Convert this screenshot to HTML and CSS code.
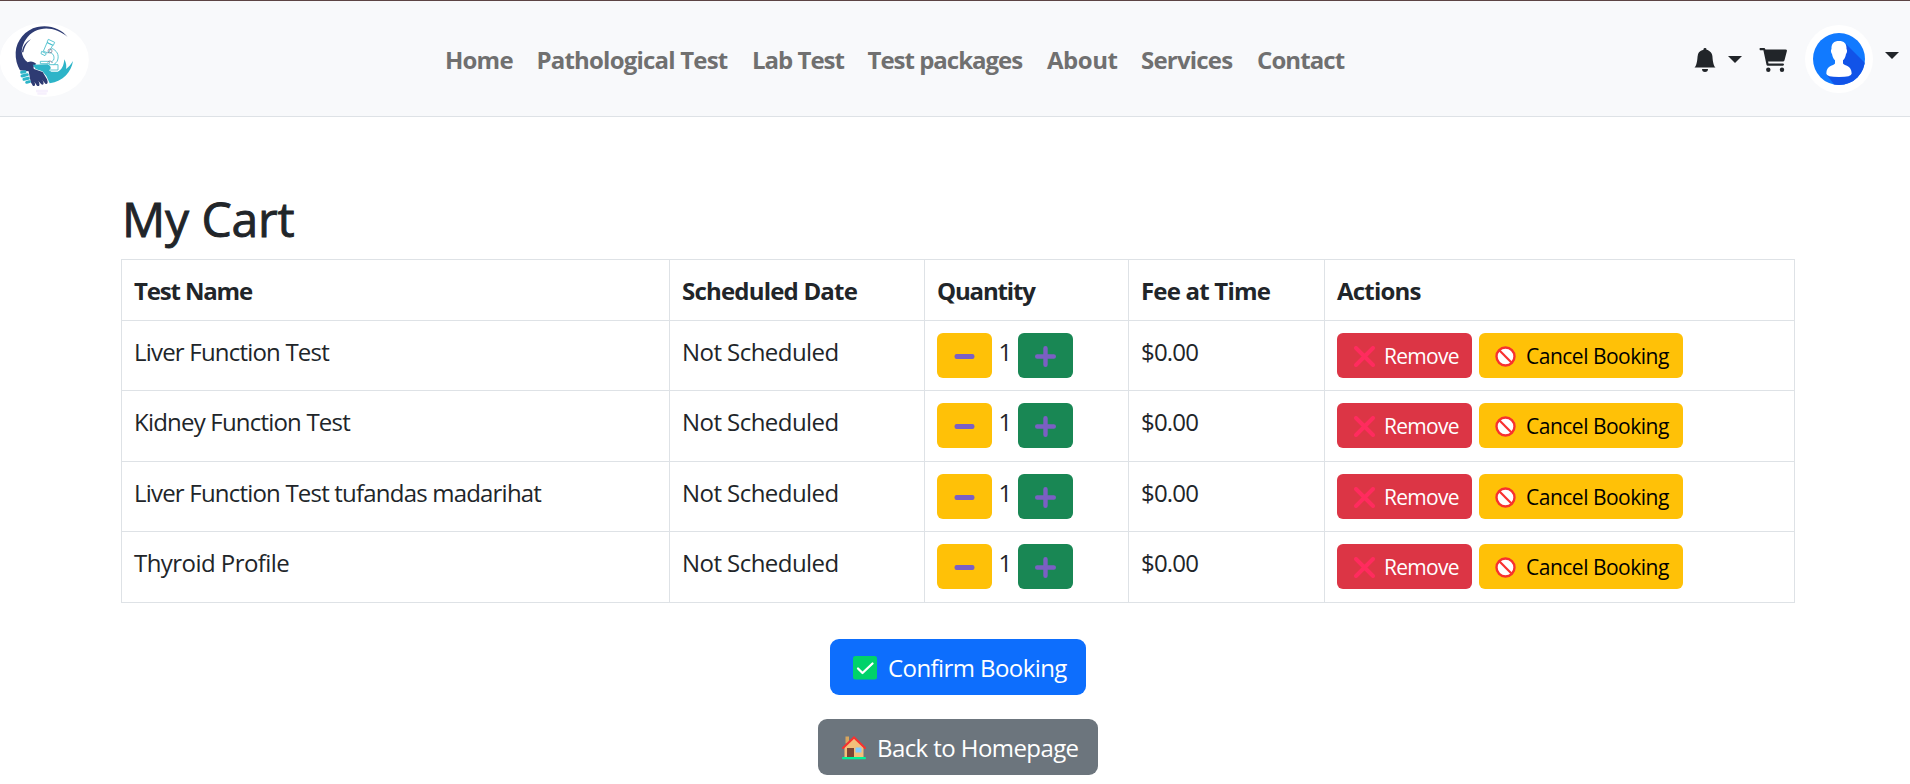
FILE: index.html
```html
<!DOCTYPE html>
<html lang="en">
<head>
<meta charset="utf-8">
<title>My Cart</title>
<link rel="stylesheet" href="styles.css">
</head>
<body>
<svg class="sprite" aria-hidden="true">
  <symbol id="minus" viewBox="0 0 21 21"><rect x="0.500" y="8" width="20" height="5" rx="2.200" fill="#7b5fc4"/></symbol>
  <symbol id="plus" viewBox="0 0 21 21"><path d="M10.5 2.2v16.6M2.2 10.5h16.6" stroke="#7b5fc4" stroke-width="4.4" stroke-linecap="round"/></symbol>
  <symbol id="cross" viewBox="0 0 21 21"><path d="M2 2l17 17M19 2L2 19" stroke="#ff2b5e" stroke-width="4" stroke-linecap="round"/></symbol>
  <symbol id="ban" viewBox="0 0 21 21"><circle cx="10.5" cy="10.5" r="9" fill="#fff" stroke="#f8312f" stroke-width="2.400"/><path d="M4.3 4.3l12.4 12.4" stroke="#f8312f" stroke-width="2.2"/></symbol>
</svg>
<header class="navbar">
  <a class="brand" href="#">
    <svg viewBox="0 69 267 222" width="89" height="74">
      <ellipse cx="133" cy="180" rx="133.500" ry="111" fill="#fff"/>
      <path d="M203 111C184 86 148 73 112 81C76 89 49 122 47 157C46 178 51 196 60 211L86 214L92 246L99 258C106 260 107 253 103 245L111 257C119 261 121 254 115 243L124 253C132 257 133 249 127 240L136 251C143 254 145 248 141 238L128 216L102 207C99 203 100 197 109 192C102 184 91 182 83 187C73 180 66 168 65 154C68 126 84 105 104 94C138 77 174 88 203 111Z" fill="#2e3b73"/>
      <path d="M66 157C68 139 77 126 93 118C81 127 74 138 70 157Z" fill="#2e3b73"/>
      <path d="M98 194L143 193C151 197 157 205 147 211L154 215H173C184 211 191 199 193 178C199 190 200 199 198 207C207 201 213 193 219 183C214 216 190 244 149 250L139 228L127 214L107 207Z" fill="#2db4c8"/>
      <g stroke="#2db4c8" stroke-width="9" stroke-linecap="round"><path d="M65 217l10-2M66 228l16-4M72 238l13-3M80 247l8-2"/></g>
      <g fill="none" stroke="#45bdcb" stroke-width="2.600" stroke-linejoin="round">
        <path d="M145 118l19 9-4 9-19-9ZM141 128l17 8-13 23-15-5ZM125 154l14 7-4 6-12-6Z"/>
        <path d="M155 145C170 151 178 164 173 180C171 187 166 190 161 194M149 157C160 160 164 169 161 180L153 187M121 184h27v7h-27ZM147 194h27v16h-25"/>
      </g>
      <circle cx="150" cy="153" r="6" fill="none" stroke="#756a83" stroke-width="2"/>
      <path d="M143 188q6-11 15 1" fill="none" stroke="#756a83" stroke-width="2"/>
      <path d="M108 273h36M112 281h28" stroke="#f6f0fd" stroke-width="7"/>
    </svg>
  </a>
  <nav class="menu">
    <a class="m1" href="#">Home</a><a class="m2" href="#">Pathological Test</a><a class="m3" href="#">Lab Test</a><a class="m4" href="#">Test packages</a><a class="m5" href="#">About</a><a class="m6" href="#">Services</a><a class="m7" href="#">Contact</a>
  </nav>
  <div class="tools">
    <svg class="bell" viewBox="0 0 16 16" width="24" height="24" fill="#212529"><path d="M8 16a2 2 0 0 0 2-2H6a2 2 0 0 0 2 2m.995-14.901a1 1 0 1 0-1.990 0A5 5 0 0 0 3 6c0 1.098-.5 6-2 7h14c-1.500-1-2-5.902-2-7 0-2.420-1.720-4.440-4.005-4.901"/></svg>
    <i class="caret"></i>
    <svg class="cart" viewBox="0 0 27 24" width="27" height="24" fill="#212529"><path d="M0 0H4.200Q5 0 5.200 .9L5.400 1.500H25.500Q27.200 1.500 26.900 3L24.500 12.200Q24.200 13.500 22.900 13.500H8.100L8.500 15.500H22.900Q24 15.700 24 16.600Q24 17.700 22.900 17.700H7.700Q6.700 17.700 6.500 16.700L3.400 2.200H0Q-1 1.100 0 0Z"/><circle cx="8.300" cy="21.800" r="2.200"/><circle cx="22" cy="21.800" r="2.200"/></svg>
    <svg class="avatar" viewBox="0 0 68 68" width="68" height="68">
      <defs><clipPath id="disc"><circle cx="34" cy="34" r="26"/></clipPath></defs>
      <circle cx="34" cy="34" r="34" fill="#fff"/>
      <circle cx="34" cy="34" r="26" fill="#117aff"/>
      <path clip-path="url(#disc)" d="M41 19L64 42V66H34L22 50L36 40Z" fill="#1153e8"/>
      <path d="M34 16C39 16 41.800 18.500 41.500 24C42.500 25 42 28 41 29C40.500 32 39.500 34 38 35.300V38.500C39.500 41 46.500 40 46.700 48.500Q46.700 52 34 52Q21.300 52 21.300 48.500C21.500 40 28.500 41 30 38.500V35.300C28.500 34 27.500 32 27 29C26 28 25.500 25 26.500 24C26.200 18.500 29 16 34 16Z" fill="#fff"/>
    </svg>
    <i class="caret caret-user"></i>
  </div>
</header>
<main class="container">
  <h1>My Cart</h1>
  <table class="cart-table">
    <colgroup><col class="c1"><col class="c2"><col class="c3"><col class="c4"><col class="c5"></colgroup>
    <thead><tr><th class="tight">Test Name</th><th>Scheduled Date</th><th class="tight">Quantity</th><th>Fee at Time</th><th>Actions</th></tr></thead>
    <tbody>
      <tr><td>Liver Function Test</td><td class="date">Not Scheduled</td>
        <td><div class="qty"><button class="btn warn sq"><svg><use href="#minus"/></svg></button><span>1</span><button class="btn ok sq"><svg><use href="#plus"/></svg></button></div></td><td>$0.00</td>
        <td><div class="acts"><button class="btn danger"><svg><use href="#cross"/></svg><span>Remove</span></button><button class="btn warn"><svg><use href="#ban"/></svg><span>Cancel Booking</span></button></div></td></tr>
      <tr class="tall"><td>Kidney Function Test</td><td class="date">Not Scheduled</td>
        <td><div class="qty"><button class="btn warn sq"><svg><use href="#minus"/></svg></button><span>1</span><button class="btn ok sq"><svg><use href="#plus"/></svg></button></div></td><td>$0.00</td>
        <td><div class="acts"><button class="btn danger"><svg><use href="#cross"/></svg><span>Remove</span></button><button class="btn warn"><svg><use href="#ban"/></svg><span>Cancel Booking</span></button></div></td></tr>
      <tr><td>Liver Function Test tufandas madarihat</td><td class="date">Not Scheduled</td>
        <td><div class="qty"><button class="btn warn sq"><svg><use href="#minus"/></svg></button><span>1</span><button class="btn ok sq"><svg><use href="#plus"/></svg></button></div></td><td>$0.00</td>
        <td><div class="acts"><button class="btn danger"><svg><use href="#cross"/></svg><span>Remove</span></button><button class="btn warn"><svg><use href="#ban"/></svg><span>Cancel Booking</span></button></div></td></tr>
      <tr class="tall"><td class="date">Thyroid Profile</td><td class="date">Not Scheduled</td>
        <td><div class="qty"><button class="btn warn sq"><svg><use href="#minus"/></svg></button><span>1</span><button class="btn ok sq"><svg><use href="#plus"/></svg></button></div></td><td>$0.00</td>
        <td><div class="acts"><button class="btn danger"><svg><use href="#cross"/></svg><span>Remove</span></button><button class="btn warn"><svg><use href="#ban"/></svg><span>Cancel Booking</span></button></div></td></tr>
    </tbody>
  </table>
  <div class="footer-actions">
    <button class="big confirm"><svg viewBox="0 0 24 24"><rect width="24" height="23.500" rx="2.500" fill="#00d26a"/><path d="M5 12.500l4.500 4.500L19.500 7.500" fill="none" stroke="#fff" stroke-width="2.300" stroke-linecap="round" stroke-linejoin="round"/></svg><span>Confirm Booking</span></button>
    <button class="big back"><svg viewBox="0 0 24 24"><path d="M3.500 .500h3.500v7h-3.500Z" fill="#d9a65e"/><path d="M2.500 11L12 1.500 21.500 11V22h-19Z" fill="#f3c07b"/><path d="M1 12L12 1.500 23 12" fill="none" stroke="#f8312f" stroke-width="2" stroke-linecap="round"/><rect x="5" y="12" width="7" height="9.500" fill="#7d4533"/><rect x="13.500" y="11.500" width="6" height="5" rx=".5" fill="#83cbff"/><rect x="0" y="21" width="24" height="2.300" rx="1" fill="#00f397"/></svg><span>Back to Homepage</span></button>
  </div>
</main>
</body>
</html>
```
FILE: styles.css
```css
* { box-sizing: border-box; }
body { margin: 0; background: #fff; color: #212529; font: 24px/36px "Open Sans", "Noto Sans", sans-serif; letter-spacing: -0.8px; overflow: hidden; }
.sprite { display: block; width: 0; height: 0; }
.navbar { height: 117px; display: grid; grid-template-columns: 445px 1fr 217px; background: #f8f9fb; border-top: 1px solid #5c4444; border-bottom: 1px solid #dee2e6; }
.brand { padding-top: 22px; }
.brand svg { display: block; }
.menu { display: grid; grid-template-columns: 91.500px 215.500px 115.5px 179.500px 94px 116px auto; padding-top: 41px; font-weight: 700; }
.menu a { color: #707070; text-decoration: none; white-space: nowrap; }
.m1, .m6 { letter-spacing: -0.8px; }
.m3, .m4 { letter-spacing: -1px; }
.m5 { letter-spacing: -0.45px; }
.m7 { letter-spacing: -0.9px; }
.tools { display: flex; }
.bell { margin-top: 47px; }
.caret { width: 14px; height: 7px; margin: 55px 0 0 11px; background: #212529; clip-path: polygon(0 0, 100% 0, 50% 100%); }
.cart { margin: 47px 0 0 18px; overflow: visible; }
.avatar { margin: 24px 0 0 18px; flex: none; }
.caret-user { margin: 51px 0 0 12px; }
.container { width: 1674px; margin-left: 121px; padding-top: 72px; }
h1 { margin: 0; height: 70px; font-size: 48px; line-height: 58px; font-weight: 500; padding: 1px 0 0 1px; letter-spacing: -0.1px; -webkit-text-stroke: 0.9px #212529; }
.cart-table { width: 1674px; table-layout: fixed; border-collapse: collapse; }
.c1 { width: 548px; } .c2 { width: 255px; } .c3 { width: 204px; } .c4 { width: 196px; }
th, td { border: 1px solid #dee2e6; padding: 13px 12px 11px; text-align: left; vertical-align: top; }
.tight { letter-spacing: -1.15px; }
.date { letter-spacing: -0.55px; }
thead tr { height: 61px; }
tbody tr { height: 70px; }
tbody tr.tall { height: 71px; }
.qty, .acts { display: flex; height: 45px; margin-top: -1px; }
.qty > span { width: 26px; text-align: center; padding-top: 1px; }
.acts { gap: 7px; }
.btn { height: 45px; border: 0; border-radius: 6px; padding: 2px 14px 0 17px; display: flex; align-items: center; gap: 10px; font: 21px/32px "Open Sans", sans-serif; letter-spacing: -0.5px; white-space: nowrap; }
.btn svg { width: 21px; height: 21px; flex: none; }
.sq { width: 55px; padding: 2px 17px 0; }
.warn { background: #ffc107; color: #000; }
.ok { background: #198754; }
.danger { background: #dc3545; color: #fff; width: 135px; gap: 9px; letter-spacing: -0.7px; }
.acts .warn { width: 204px; padding-left: 16px; }
.btn span { margin-top: -1px; }
.footer-actions { display: flex; flex-direction: column; align-items: center; gap: 24px; padding-top: 36px; }
.big { height: 56px; border: 0; border-radius: 9px; color: #fff; display: flex; align-items: center; font: 24px/36px "Open Sans", sans-serif; letter-spacing: -0.58px; gap: 11px; padding: 2px 0 0 23px; white-space: nowrap; }
.big svg { width: 24px; height: 24px; flex: none; }
.confirm { width: 256px; background: #0d6efd; }
.back { width: 280px; padding-left: 24px; background: #6c757d; }
```
